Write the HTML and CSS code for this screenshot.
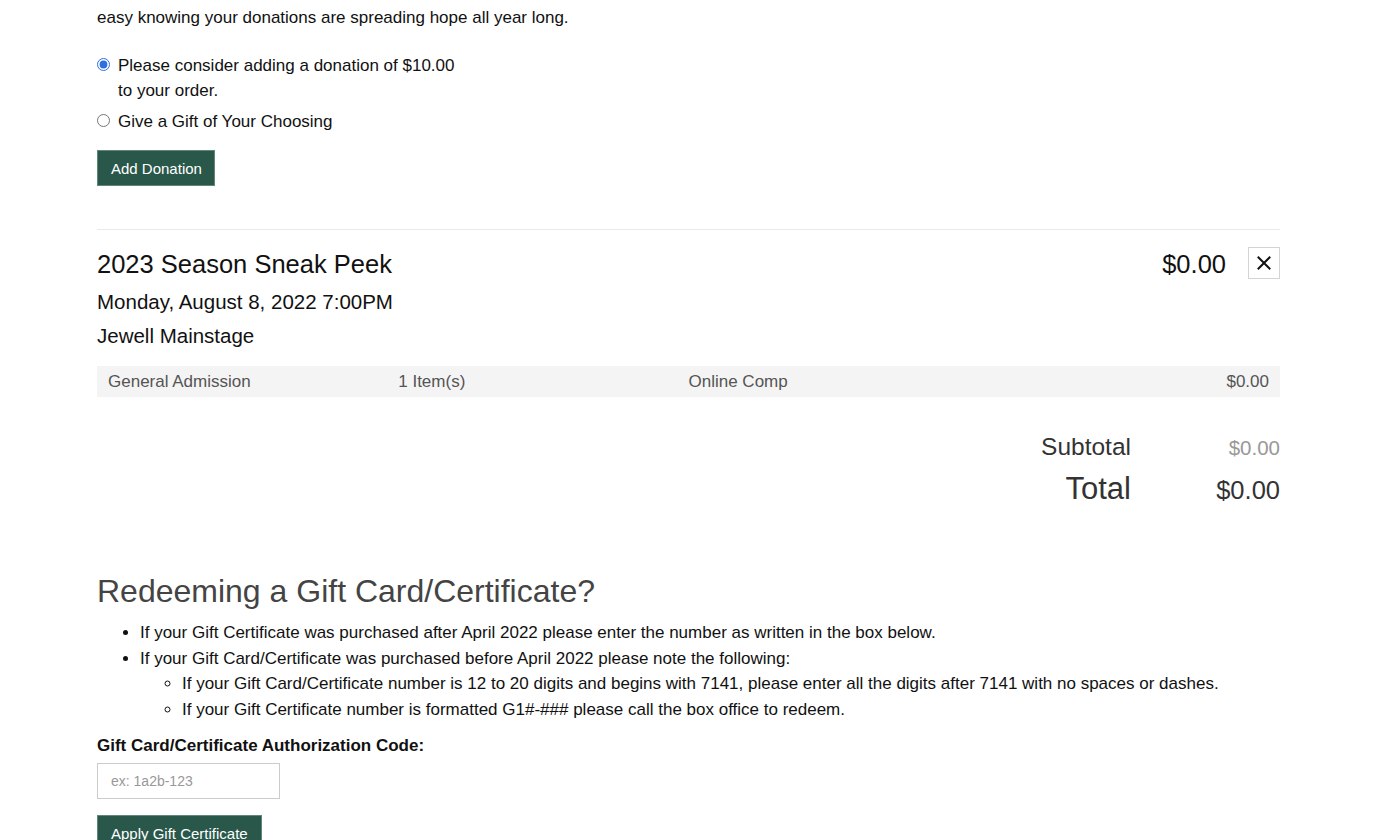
FILE: index.html
```html
<!DOCTYPE html>
<html lang="en">
<head>
<meta charset="utf-8">
<title>Cart</title>
<link rel="stylesheet" href="styles.css">
</head>
<body>
<main class="page">
  <section class="donation">
    <p class="intro"><span class="intro-line">Your gift helps bring live theatre to young people, supports programs in the community and keeps our ticket prices low. Give today and rest</span><br>easy knowing your donations are spreading hope all year long.</p>
    <label class="radio-row">
      <input type="radio" name="don" checked>
      <span class="radio-text">Please consider adding a donation of $10.00 to your order.</span>
    </label>
    <label class="radio-row">
      <input type="radio" name="don">
      <span class="radio-text">Give a Gift of Your Choosing</span>
    </label>
    <button class="btn btn-donate" type="button">Add Donation</button>
  </section>

  <section class="item">
    <div class="item-head">
      <h2 class="item-title">2023 Season Sneak Peek</h2>
      <div class="item-price">
        <span class="price">$0.00</span>
        <button class="remove" type="button" aria-label="Remove">
          <svg width="14" height="14" viewBox="0 0 14 14"><path d="M1.5 1.5 L12.5 12.5 M12.5 1.5 L1.5 12.5" stroke="#111" stroke-width="2" stroke-linecap="square"/></svg>
        </button>
      </div>
    </div>
    <div class="item-date">Monday, August 8, 2022 7:00PM</div>
    <div class="item-venue">Jewell Mainstage</div>
    <div class="ticket-row">
      <span>General Admission</span>
      <span>1 Item(s)</span>
      <span>Online Comp</span>
      <span class="amount">$0.00</span>
    </div>
  </section>

  <section class="totals">
    <div class="tot-row subtotal"><span class="tot-label">Subtotal</span><span class="tot-val">$0.00</span></div>
    <div class="tot-row total"><span class="tot-label">Total</span><span class="tot-val">$0.00</span></div>
  </section>

  <section class="gift">
    <h2 class="gift-title">Redeeming a Gift Card/Certificate?</h2>
    <ul class="gift-list">
      <li>If your Gift Certificate was purchased after April 2022 please enter the number as written in the box below.</li>
      <li>If your Gift Card/Certificate was purchased before April 2022 please note the following:
        <ul>
          <li>If your Gift Card/Certificate number is 12 to 20 digits and begins with 7141, please enter all the digits after 7141 with no spaces or dashes.</li>
          <li>If your Gift Certificate number is formatted G1#-### please call the box office to redeem.</li>
        </ul>
      </li>
    </ul>
    <label class="code-label" for="code">Gift Card/Certificate Authorization Code:</label>
    <input class="code-input" id="code" type="text" placeholder="ex: 1a2b-123">
    <button class="btn btn-apply" type="button">Apply Gift Certificate</button>
  </section>
</main>
</body>
</html>
```

FILE: styles.css
```css
html, body {
  margin: 0;
  padding: 0;
  background: #fff;
}
body {
  font-family: "Liberation Sans", Arial, Helvetica, sans-serif;
  color: #111;
  overflow: hidden;
}
.page {
  width: 1183px;
  margin: -21px 0 0 97px;
}
.intro {
  margin: 0 0 22px;
  font-size: 17px;
  line-height: 26px;
  width: 1183px;
}
.intro-line {
  white-space: nowrap;
}
.radio-row {
  display: flex;
  align-items: flex-start;
  font-size: 17px;
  line-height: 25px;
  margin-bottom: 6px;
}
.radio-row input {
  margin: 5px 8px 0 0;
  width: 13px;
  height: 13px;
  accent-color: #2f6fe0;
}
.radio-text {
  width: 350px;
}
.btn {
  border: 1px solid #5f8878;
  background: #29584a;
  color: #fff;
  font-family: inherit;
  font-size: 15px;
  cursor: pointer;
}
.btn-donate {
  margin-top: 16px;
  height: 36px;
  padding: 0 12px 0 13px;
  display: block;
}
.item {
  margin-top: 43px;
  border-top: 1px solid #eaeaea;
  padding-top: 15px;
}
.item-head {
  display: flex;
  justify-content: space-between;
  align-items: flex-start;
}
.item-title {
  margin: 2px 0 0;
  font-weight: normal;
  font-size: 25.5px;
  line-height: 34px;
}
.item-price {
  display: flex;
  align-items: flex-start;
  gap: 22px;
}
.price {
  font-size: 25.5px;
  line-height: 34px;
  margin-top: 2px;
}
.remove {
  margin-top: 2px;
  width: 32px;
  height: 32px;
  border: 1px solid #d4d4d4;
  background: #fff;
  display: flex;
  align-items: center;
  justify-content: center;
  padding: 0;
}
.item-date, .item-venue {
  font-size: 20.5px;
  line-height: 34px;
}
.item-date { margin-top: 4px; }
.item-venue { margin-top: 0; }
.ticket-row {
  margin-top: 13px;
  background: #f4f4f4;
  display: grid;
  grid-template-columns: repeat(4, 1fr);
  padding: 0 11px;
  height: 31px;
  align-items: center;
  font-size: 17px;
  color: #555;
}
.ticket-row .amount { text-align: right; }
.totals {
  margin-top: 35px;
  display: flex;
  flex-direction: column;
  align-items: flex-end;
}
.tot-row {
  display: grid;
  grid-template-columns: auto 149px;
  align-items: baseline;
}
.tot-label { text-align: right; color: #333; }
.tot-val { text-align: right; }
.subtotal .tot-label { font-size: 24.5px; line-height: 30px; }
.subtotal .tot-val { font-size: 20.5px; color: #999; }
.total .tot-label { font-size: 31px; line-height: 44px; margin-top: 5px; }
.total .tot-val { font-size: 25.5px; color: #333; }
.gift { margin-top: 58px; }
.gift-title {
  margin: 0;
  font-weight: normal;
  font-size: 32px;
  line-height: 44px;
  color: #444;
}
.gift-list {
  margin: 7px 0 0;
  padding-left: 43px;
  font-size: 17px;
  line-height: 25.6px;
}
.gift-list ul {
  padding-left: 42px;
  margin: 0;
  list-style: circle;
}
.code-label {
  display: block;
  font-weight: bold;
  font-size: 17px;
  margin-top: 14px;
  line-height: 20px;
}
.code-input {
  display: block;
  margin-top: 7px;
  width: 183px;
  height: 36px;
  box-sizing: border-box;
  border: 1px solid #ccc;
  padding: 0 13px;
  font-family: inherit;
  font-size: 14px;
}
.code-input::placeholder { color: #999; }
.btn-apply {
  margin-top: 16px;
  height: 36px;
  padding: 0 13px;
  display: block;
}
```
